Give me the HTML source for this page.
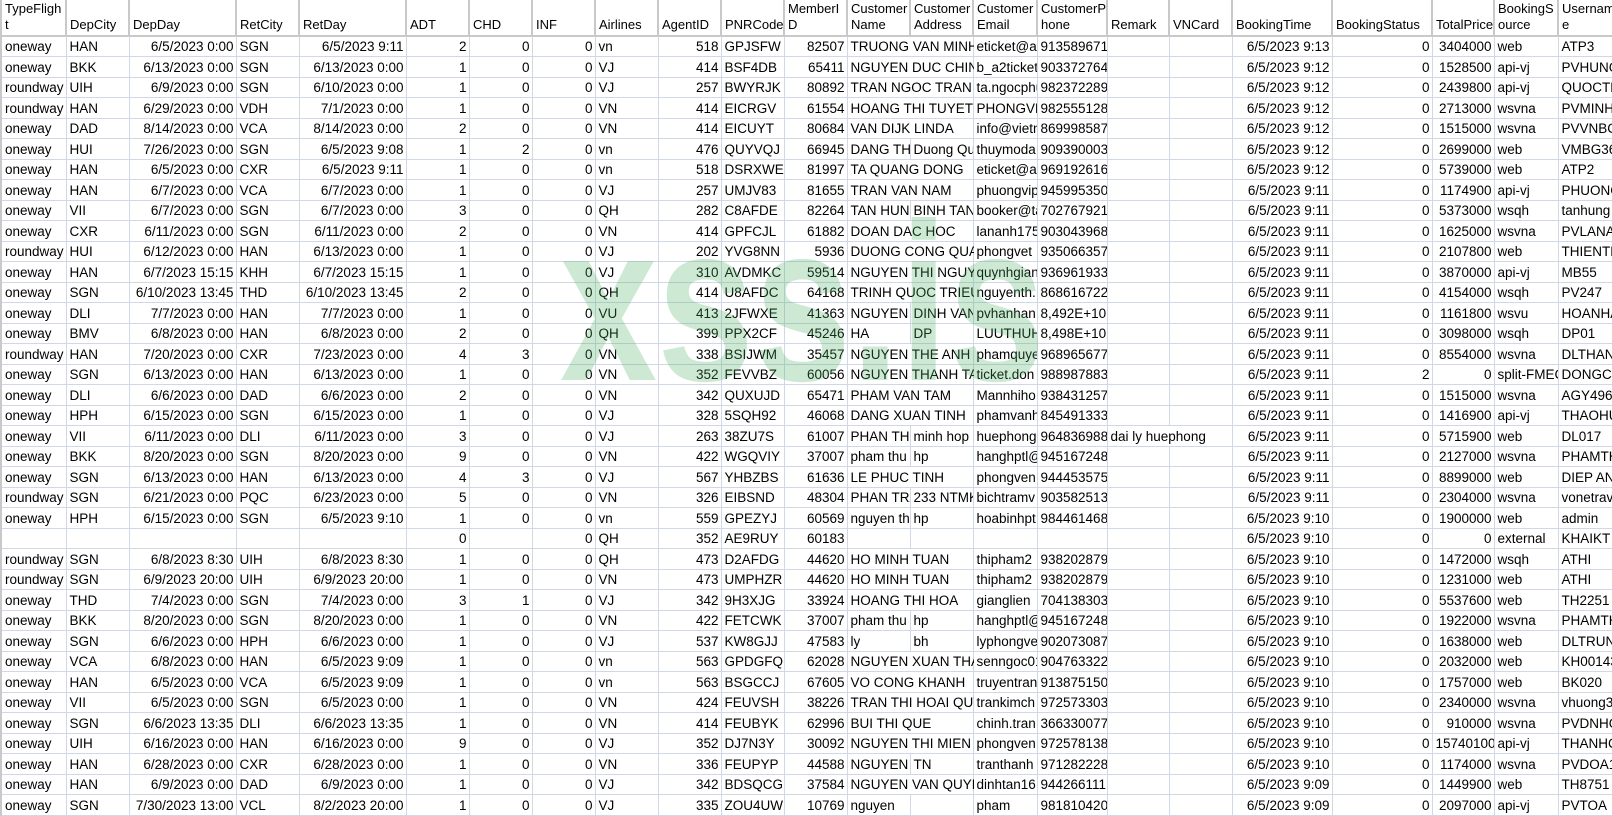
<!DOCTYPE html>
<html><head><meta charset="utf-8">
<style>
body{margin:0;width:1612px;height:784px;overflow:hidden;background:#fff;position:relative}
table{border-collapse:collapse;table-layout:fixed;width:1621px;font-family:"Liberation Sans",sans-serif;font-size:13.5px;color:#000}
tr{height:20.5px}
td{padding:0 2px 1px 3px;border-right:1px solid #d0d7e5;border-bottom:1px solid #d0d7e5;white-space:nowrap;overflow:hidden;vertical-align:bottom;line-height:16px;text-align:left}
td:nth-child(3),td:nth-child(5),td:nth-child(6),td:nth-child(7),td:nth-child(8),td:nth-child(10),td:nth-child(12),td:nth-child(16),td:nth-child(19),td:nth-child(20),td:nth-child(21){text-align:right}
td:nth-child(15){position:relative;z-index:1;background:#fff}
td.o{overflow:visible;border-right-color:transparent}
tr.h{height:36px}
tr.h td{text-align:left;font-size:13px;line-height:16px;border-right:2px solid #c9c9c9;border-bottom:2px solid #c9c9c9;padding-bottom:2px}
td:first-child{border-left:2px solid #c9c9c9}
svg{position:absolute;left:0;top:0;pointer-events:none;z-index:5}
</style></head><body>
<table>
<colgroup><col style="width:65px"><col style="width:63px"><col style="width:107px"><col style="width:63px"><col style="width:107px"><col style="width:63px"><col style="width:63px"><col style="width:63px"><col style="width:63px"><col style="width:63px"><col style="width:63px"><col style="width:63px"><col style="width:63px"><col style="width:63px"><col style="width:64px"><col style="width:70px"><col style="width:62px"><col style="width:63px"><col style="width:100px"><col style="width:100px"><col style="width:62px"><col style="width:64px"><col style="width:64px"></colgroup>
<tr class="h"><td>TypeFligh<br>t</td><td>DepCity</td><td>DepDay</td><td>RetCity</td><td>RetDay</td><td>ADT</td><td>CHD</td><td>INF</td><td>Airlines</td><td>AgentID</td><td>PNRCode</td><td>MemberI<br>D</td><td>Customer<br>Name</td><td>Customer<br>Address</td><td>Customer<br>Email</td><td>CustomerP<br>hone</td><td>Remark</td><td>VNCard</td><td>BookingTime</td><td>BookingStatus</td><td>TotalPrice</td><td>BookingS<br>ource</td><td>Usernam<br>e</td></tr>
<tr><td>oneway</td><td>HAN</td><td>6/5/2023 0:00</td><td>SGN</td><td>6/5/2023 9:11</td><td>2</td><td>0</td><td>0</td><td>vn</td><td>518</td><td>GPJSFW</td><td>82507</td><td class="o">TRUONG VAN MINH</td><td></td><td>eticket@atp</td><td>913589671</td><td></td><td></td><td>6/5/2023 9:13</td><td>0</td><td>3404000</td><td>web</td><td>ATP3</td></tr>
<tr><td>oneway</td><td>BKK</td><td>6/13/2023 0:00</td><td>SGN</td><td>6/13/2023 0:00</td><td>1</td><td>0</td><td>0</td><td>VJ</td><td>414</td><td>BSF4DB</td><td>65411</td><td class="o">NGUYEN DUC CHINH</td><td></td><td>b_a2ticket</td><td>903372764</td><td></td><td></td><td>6/5/2023 9:12</td><td>0</td><td>1528500</td><td>api-vj</td><td>PVHUNG</td></tr>
<tr><td>roundway</td><td>UIH</td><td>6/9/2023 0:00</td><td>SGN</td><td>6/10/2023 0:00</td><td>1</td><td>0</td><td>0</td><td>VJ</td><td>257</td><td>BWYRJK</td><td>80892</td><td class="o">TRAN NGOC TRAN</td><td></td><td>ta.ngocphu</td><td>982372289</td><td></td><td></td><td>6/5/2023 9:12</td><td>0</td><td>2439800</td><td>api-vj</td><td>QUOCTE</td></tr>
<tr><td>roundway</td><td>HAN</td><td>6/29/2023 0:00</td><td>VDH</td><td>7/1/2023 0:00</td><td>1</td><td>0</td><td>0</td><td>VN</td><td>414</td><td>EICRGV</td><td>61554</td><td class="o">HOANG THI TUYET NHUNG</td><td></td><td>PHONGVE</td><td>982555128</td><td></td><td></td><td>6/5/2023 9:12</td><td>0</td><td>2713000</td><td>wsvna</td><td>PVMINH</td></tr>
<tr><td>oneway</td><td>DAD</td><td>8/14/2023 0:00</td><td>VCA</td><td>8/14/2023 0:00</td><td>2</td><td>0</td><td>0</td><td>VN</td><td>414</td><td>EICUYT</td><td>80684</td><td class="o">VAN DIJK LINDA</td><td></td><td>info@vietn</td><td>869998587</td><td></td><td></td><td>6/5/2023 9:12</td><td>0</td><td>1515000</td><td>wsvna</td><td>PVVNBC</td></tr>
<tr><td>oneway</td><td>HUI</td><td>7/26/2023 0:00</td><td>SGN</td><td>6/5/2023 9:08</td><td>1</td><td>2</td><td>0</td><td>vn</td><td>476</td><td>QUYVQJ</td><td>66945</td><td>DANG THI</td><td>Duong Quang</td><td>thuymoda</td><td>909390003</td><td></td><td></td><td>6/5/2023 9:12</td><td>0</td><td>2699000</td><td>web</td><td>VMBG36</td></tr>
<tr><td>oneway</td><td>HAN</td><td>6/5/2023 0:00</td><td>CXR</td><td>6/5/2023 9:11</td><td>1</td><td>0</td><td>0</td><td>vn</td><td>518</td><td>DSRXWE</td><td>81997</td><td class="o">TA QUANG DONG</td><td></td><td>eticket@atp</td><td>969192616</td><td></td><td></td><td>6/5/2023 9:12</td><td>0</td><td>5739000</td><td>web</td><td>ATP2</td></tr>
<tr><td>oneway</td><td>HAN</td><td>6/7/2023 0:00</td><td>VCA</td><td>6/7/2023 0:00</td><td>1</td><td>0</td><td>0</td><td>VJ</td><td>257</td><td>UMJV83</td><td>81655</td><td class="o">TRAN VAN NAM</td><td></td><td>phuongvip</td><td>945995350</td><td></td><td></td><td>6/5/2023 9:11</td><td>0</td><td>1174900</td><td>api-vj</td><td>PHUONG</td></tr>
<tr><td>oneway</td><td>VII</td><td>6/7/2023 0:00</td><td>SGN</td><td>6/7/2023 0:00</td><td>3</td><td>0</td><td>0</td><td>QH</td><td>282</td><td>C8AFDE</td><td>82264</td><td>TAN HUNG</td><td>BINH TAN</td><td>booker@tan</td><td>702767921</td><td></td><td></td><td>6/5/2023 9:11</td><td>0</td><td>5373000</td><td>wsqh</td><td>tanhung</td></tr>
<tr><td>oneway</td><td>CXR</td><td>6/11/2023 0:00</td><td>SGN</td><td>6/11/2023 0:00</td><td>2</td><td>0</td><td>0</td><td>VN</td><td>414</td><td>GPFCJL</td><td>61882</td><td class="o">DOAN DAC HOC</td><td></td><td>lananh175</td><td>903043968</td><td></td><td></td><td>6/5/2023 9:11</td><td>0</td><td>1625000</td><td>wsvna</td><td>PVLANA</td></tr>
<tr><td>roundway</td><td>HUI</td><td>6/12/2023 0:00</td><td>HAN</td><td>6/13/2023 0:00</td><td>1</td><td>0</td><td>0</td><td>VJ</td><td>202</td><td>YVG8NN</td><td>5936</td><td class="o">DUONG CONG QUANG</td><td></td><td>phongvet</td><td>935066357</td><td></td><td></td><td>6/5/2023 9:11</td><td>0</td><td>2107800</td><td>web</td><td>THIENTH</td></tr>
<tr><td>oneway</td><td>HAN</td><td>6/7/2023 15:15</td><td>KHH</td><td>6/7/2023 15:15</td><td>1</td><td>0</td><td>0</td><td>VJ</td><td>310</td><td>AVDMKC</td><td>59514</td><td class="o">NGUYEN THI NGUYEN</td><td></td><td>quynhgiang</td><td>936961933</td><td></td><td></td><td>6/5/2023 9:11</td><td>0</td><td>3870000</td><td>api-vj</td><td>MB55</td></tr>
<tr><td>oneway</td><td>SGN</td><td>6/10/2023 13:45</td><td>THD</td><td>6/10/2023 13:45</td><td>2</td><td>0</td><td>0</td><td>QH</td><td>414</td><td>U8AFDC</td><td>64168</td><td class="o">TRINH QUOC TRIEU</td><td></td><td>nguyenth.</td><td>868616722</td><td></td><td></td><td>6/5/2023 9:11</td><td>0</td><td>4154000</td><td>wsqh</td><td>PV247</td></tr>
<tr><td>oneway</td><td>DLI</td><td>7/7/2023 0:00</td><td>HAN</td><td>7/7/2023 0:00</td><td>1</td><td>0</td><td>0</td><td>VU</td><td>413</td><td>2JFWXE</td><td>41363</td><td>NGUYEN THI</td><td>DINH VAN</td><td>pvhanhan</td><td>8,492E+10</td><td></td><td></td><td>6/5/2023 9:11</td><td>0</td><td>1161800</td><td>wsvu</td><td>HOANHA</td></tr>
<tr><td>oneway</td><td>BMV</td><td>6/8/2023 0:00</td><td>HAN</td><td>6/8/2023 0:00</td><td>2</td><td>0</td><td>0</td><td>QH</td><td>399</td><td>PPX2CF</td><td>45246</td><td>HA</td><td>DP</td><td>LUUTHUHA</td><td>8,498E+10</td><td></td><td></td><td>6/5/2023 9:11</td><td>0</td><td>3098000</td><td>wsqh</td><td>DP01</td></tr>
<tr><td>roundway</td><td>HAN</td><td>7/20/2023 0:00</td><td>CXR</td><td>7/23/2023 0:00</td><td>4</td><td>3</td><td>0</td><td>VN</td><td>338</td><td>BSIJWM</td><td>35457</td><td class="o">NGUYEN THE ANH</td><td></td><td>phamquyen</td><td>968965677</td><td></td><td></td><td>6/5/2023 9:11</td><td>0</td><td>8554000</td><td>wsvna</td><td>DLTHANH</td></tr>
<tr><td>oneway</td><td>SGN</td><td>6/13/2023 0:00</td><td>HAN</td><td>6/13/2023 0:00</td><td>1</td><td>0</td><td>0</td><td>VN</td><td>352</td><td>FEVVBZ</td><td>60056</td><td class="o">NGUYEN THANH TAM</td><td></td><td>ticket.don</td><td>988987883</td><td></td><td></td><td>6/5/2023 9:11</td><td>2</td><td>0</td><td>split-FMEC</td><td>DONGCH</td></tr>
<tr><td>oneway</td><td>DLI</td><td>6/6/2023 0:00</td><td>DAD</td><td>6/6/2023 0:00</td><td>2</td><td>0</td><td>0</td><td>VN</td><td>342</td><td>QUXUJD</td><td>65471</td><td class="o">PHAM VAN TAM</td><td></td><td>Mannhiho</td><td>938431257</td><td></td><td></td><td>6/5/2023 9:11</td><td>0</td><td>1515000</td><td>wsvna</td><td>AGY4962</td></tr>
<tr><td>oneway</td><td>HPH</td><td>6/15/2023 0:00</td><td>SGN</td><td>6/15/2023 0:00</td><td>1</td><td>0</td><td>0</td><td>VJ</td><td>328</td><td>5SQH92</td><td>46068</td><td class="o">DANG XUAN TINH</td><td></td><td>phamvanh</td><td>845491333</td><td></td><td></td><td>6/5/2023 9:11</td><td>0</td><td>1416900</td><td>api-vj</td><td>THAOHU</td></tr>
<tr><td>oneway</td><td>VII</td><td>6/11/2023 0:00</td><td>DLI</td><td>6/11/2023 0:00</td><td>3</td><td>0</td><td>0</td><td>VJ</td><td>263</td><td>38ZU7S</td><td>61007</td><td>PHAN THI</td><td>minh hop</td><td>huephong</td><td>964836988</td><td class="o">dai ly huephong</td><td></td><td>6/5/2023 9:11</td><td>0</td><td>5715900</td><td>web</td><td>DL017</td></tr>
<tr><td>oneway</td><td>BKK</td><td>8/20/2023 0:00</td><td>SGN</td><td>8/20/2023 0:00</td><td>9</td><td>0</td><td>0</td><td>VN</td><td>422</td><td>WGQVIY</td><td>37007</td><td>pham thu</td><td>hp</td><td>hanghptl@</td><td>945167248</td><td></td><td></td><td>6/5/2023 9:11</td><td>0</td><td>2127000</td><td>wsvna</td><td>PHAMTH</td></tr>
<tr><td>oneway</td><td>SGN</td><td>6/13/2023 0:00</td><td>HAN</td><td>6/13/2023 0:00</td><td>4</td><td>3</td><td>0</td><td>VJ</td><td>567</td><td>YHBZBS</td><td>61636</td><td class="o">LE PHUC TINH</td><td></td><td>phongven</td><td>944453575</td><td></td><td></td><td>6/5/2023 9:11</td><td>0</td><td>8899000</td><td>web</td><td>DIEP AN</td></tr>
<tr><td>roundway</td><td>SGN</td><td>6/21/2023 0:00</td><td>PQC</td><td>6/23/2023 0:00</td><td>5</td><td>0</td><td>0</td><td>VN</td><td>326</td><td>EIBSND</td><td>48304</td><td>PHAN TRAM</td><td>233 NTMK</td><td>bichtramv</td><td>903582513</td><td></td><td></td><td>6/5/2023 9:11</td><td>0</td><td>2304000</td><td>wsvna</td><td>vonetrav</td></tr>
<tr><td>oneway</td><td>HPH</td><td>6/15/2023 0:00</td><td>SGN</td><td>6/5/2023 9:10</td><td>1</td><td>0</td><td>0</td><td>vn</td><td>559</td><td>GPEZYJ</td><td>60569</td><td>nguyen thi</td><td>hp</td><td>hoabinhpt</td><td>984461468</td><td></td><td></td><td>6/5/2023 9:10</td><td>0</td><td>1900000</td><td>web</td><td>admin</td></tr>
<tr><td></td><td></td><td></td><td></td><td></td><td>0</td><td></td><td>0</td><td>QH</td><td>352</td><td>AE9RUY</td><td>60183</td><td></td><td></td><td></td><td></td><td></td><td></td><td>6/5/2023 9:10</td><td>0</td><td>0</td><td>external</td><td>KHAIKT</td></tr>
<tr><td>roundway</td><td>SGN</td><td>6/8/2023 8:30</td><td>UIH</td><td>6/8/2023 8:30</td><td>1</td><td>0</td><td>0</td><td>QH</td><td>473</td><td>D2AFDG</td><td>44620</td><td class="o">HO MINH TUAN</td><td></td><td>thipham2</td><td>938202879</td><td></td><td></td><td>6/5/2023 9:10</td><td>0</td><td>1472000</td><td>wsqh</td><td>ATHI</td></tr>
<tr><td>roundway</td><td>SGN</td><td>6/9/2023 20:00</td><td>UIH</td><td>6/9/2023 20:00</td><td>1</td><td>0</td><td>0</td><td>VN</td><td>473</td><td>UMPHZR</td><td>44620</td><td class="o">HO MINH TUAN</td><td></td><td>thipham2</td><td>938202879</td><td></td><td></td><td>6/5/2023 9:10</td><td>0</td><td>1231000</td><td>web</td><td>ATHI</td></tr>
<tr><td>oneway</td><td>THD</td><td>7/4/2023 0:00</td><td>SGN</td><td>7/4/2023 0:00</td><td>3</td><td>1</td><td>0</td><td>VJ</td><td>342</td><td>9H3XJG</td><td>33924</td><td class="o">HOANG THI HOA</td><td></td><td>gianglien</td><td>704138303</td><td></td><td></td><td>6/5/2023 9:10</td><td>0</td><td>5537600</td><td>web</td><td>TH2251</td></tr>
<tr><td>oneway</td><td>BKK</td><td>8/20/2023 0:00</td><td>SGN</td><td>8/20/2023 0:00</td><td>1</td><td>0</td><td>0</td><td>VN</td><td>422</td><td>FETCWK</td><td>37007</td><td>pham thu</td><td>hp</td><td>hanghptl@</td><td>945167248</td><td></td><td></td><td>6/5/2023 9:10</td><td>0</td><td>1922000</td><td>wsvna</td><td>PHAMTH</td></tr>
<tr><td>oneway</td><td>SGN</td><td>6/6/2023 0:00</td><td>HPH</td><td>6/6/2023 0:00</td><td>1</td><td>0</td><td>0</td><td>VJ</td><td>537</td><td>KW8GJJ</td><td>47583</td><td>ly</td><td>bh</td><td>lyphongve</td><td>902073087</td><td></td><td></td><td>6/5/2023 9:10</td><td>0</td><td>1638000</td><td>web</td><td>DLTRUNG</td></tr>
<tr><td>oneway</td><td>VCA</td><td>6/8/2023 0:00</td><td>HAN</td><td>6/5/2023 9:09</td><td>1</td><td>0</td><td>0</td><td>vn</td><td>563</td><td>GPDGFQ</td><td>62028</td><td class="o">NGUYEN XUAN THAO</td><td></td><td>senngoc01</td><td>904763322</td><td></td><td></td><td>6/5/2023 9:10</td><td>0</td><td>2032000</td><td>web</td><td>KH00143</td></tr>
<tr><td>oneway</td><td>HAN</td><td>6/5/2023 0:00</td><td>VCA</td><td>6/5/2023 9:09</td><td>1</td><td>0</td><td>0</td><td>vn</td><td>563</td><td>BSGCCJ</td><td>67605</td><td class="o">VO CONG KHANH</td><td></td><td>truyentran</td><td>913875150</td><td></td><td></td><td>6/5/2023 9:10</td><td>0</td><td>1757000</td><td>web</td><td>BK020</td></tr>
<tr><td>oneway</td><td>VII</td><td>6/5/2023 0:00</td><td>SGN</td><td>6/5/2023 0:00</td><td>1</td><td>0</td><td>0</td><td>VN</td><td>424</td><td>FEUVSH</td><td>38226</td><td class="o">TRAN THI HOAI QUYEN</td><td></td><td>trankimch</td><td>972573303</td><td></td><td></td><td>6/5/2023 9:10</td><td>0</td><td>2340000</td><td>wsvna</td><td>vhuong3</td></tr>
<tr><td>oneway</td><td>SGN</td><td>6/6/2023 13:35</td><td>DLI</td><td>6/6/2023 13:35</td><td>1</td><td>0</td><td>0</td><td>VN</td><td>414</td><td>FEUBYK</td><td>62996</td><td class="o">BUI THI QUE</td><td></td><td>chinh.tran</td><td>366330077</td><td></td><td></td><td>6/5/2023 9:10</td><td>0</td><td>910000</td><td>wsvna</td><td>PVDNHO</td></tr>
<tr><td>oneway</td><td>UIH</td><td>6/16/2023 0:00</td><td>HAN</td><td>6/16/2023 0:00</td><td>9</td><td>0</td><td>0</td><td>VJ</td><td>352</td><td>DJ7N3Y</td><td>30092</td><td class="o">NGUYEN THI MIEN</td><td></td><td>phongven</td><td>972578138</td><td></td><td></td><td>6/5/2023 9:10</td><td>0</td><td>15740100</td><td>api-vj</td><td>THANHC</td></tr>
<tr><td>oneway</td><td>HAN</td><td>6/28/2023 0:00</td><td>CXR</td><td>6/28/2023 0:00</td><td>1</td><td>0</td><td>0</td><td>VN</td><td>336</td><td>FEUPYP</td><td>44588</td><td>NGUYEN THI</td><td>TN</td><td>tranthanh</td><td>971282228</td><td></td><td></td><td>6/5/2023 9:10</td><td>0</td><td>1174000</td><td>wsvna</td><td>PVDOA1</td></tr>
<tr><td>oneway</td><td>HAN</td><td>6/9/2023 0:00</td><td>DAD</td><td>6/9/2023 0:00</td><td>1</td><td>0</td><td>0</td><td>VJ</td><td>342</td><td>BDSQCG</td><td>37584</td><td class="o">NGUYEN VAN QUYET</td><td></td><td>dinhtan16</td><td>944266111</td><td></td><td></td><td>6/5/2023 9:09</td><td>0</td><td>1449900</td><td>web</td><td>TH8751</td></tr>
<tr><td>oneway</td><td>SGN</td><td>7/30/2023 13:00</td><td>VCL</td><td>8/2/2023 20:00</td><td>1</td><td>0</td><td>0</td><td>VJ</td><td>335</td><td>ZOU4UW</td><td>10769</td><td>nguyen</td><td></td><td>pham</td><td>981810420</td><td></td><td></td><td>6/5/2023 9:09</td><td>0</td><td>2097000</td><td>api-vj</td><td>PVTOA</td></tr>
</table>
<svg width="1612" height="784"><text x="560" y="380" font-family="Liberation Sans, sans-serif" font-weight="bold" font-size="225" textLength="485" lengthAdjust="spacingAndGlyphs" fill="rgb(70,175,95)" fill-opacity="0.27">xss.is</text></svg>
</body></html>
